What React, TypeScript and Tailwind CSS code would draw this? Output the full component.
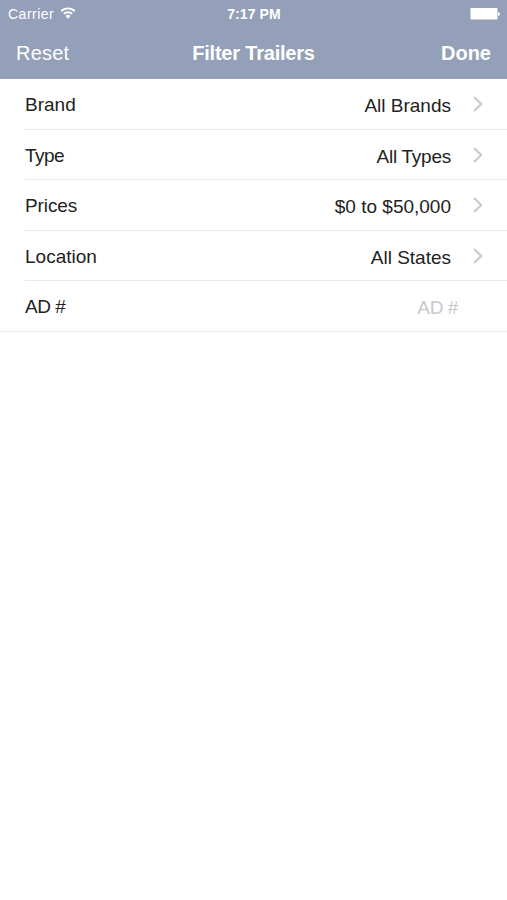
const filters = [
  { label: 'Brand', value: 'All Brands', labelClass: '', valueClass: '' },
  { label: 'Type', value: 'All Types', labelClass: 'tracking-[-0.5px]', valueClass: 'tracking-[-0.25px]' },
  { label: 'Prices', value: '$0 to $50,000', labelClass: 'tracking-[-0.1px]', valueClass: '' },
  { label: 'Location', value: 'All States', labelClass: '', valueClass: '' },
];

function WifiIcon() {
  return (
    <svg width="16" height="12" viewBox="0 0 16 12" fill="none" stroke="white" strokeWidth="1.9">
      <path d="M1.2 4.2a9.6 9.6 0 0 1 13.6 0" />
      <path d="M3.8 6.9a6 6 0 0 1 8.4 0" />
      <path d="M8 11.8 5.5 9a3.5 3.5 0 0 1 5 0Z" fill="white" stroke="none" />
    </svg>
  );
}

function BatteryIcon() {
  return (
    <svg width="30" height="12" viewBox="0 0 30 12" fill="white">
      <rect x="0.5" y="0" width="27" height="11.6" rx="1.2" />
      <path d="M28.1 3.9c2.4.4 2.4 3.6 0 4Z" />
    </svg>
  );
}

function ChevronIcon() {
  return (
    <svg width="10" height="16" viewBox="0 0 10 16" fill="none" stroke="#c7c7cc" strokeWidth="2">
      <path d="m1.2 1 7 7-7 7" />
    </svg>
  );
}

function FilterRow({ label, value, labelClass, valueClass }: (typeof filters)[number]) {
  return (
    <button
      type="button"
      className="ml-[25px] flex h-[50.6px] items-center border-b border-[#e9e9eb] pr-[24px] text-left"
    >
      <span className={`pt-[3px] ${labelClass}`}>{label}</span>
      <span className={`ml-auto pt-[5px] ${valueClass}`}>{value}</span>
      <span className="ml-[22px] pt-px">
        <ChevronIcon />
      </span>
    </button>
  );
}

export default function App() {
  return (
    <div className="flex min-h-[900px] flex-col bg-white font-['Liberation_Sans',sans-serif] text-[19px] text-[#222]">
      <header className="flex h-[79px] flex-col bg-[#949fb9] text-white">
        <div className="grid h-[27px] grid-cols-3 items-center pr-[7px] pl-2 text-[14px]">
          <div className="flex items-center gap-1.5">
            <span className="pt-px tracking-[0.5px]">Carrier</span>
            <span className="pb-[2px]">
              <WifiIcon />
            </span>
          </div>
          <span className="pt-px text-center font-bold tracking-[0.1px]">7:17 PM</span>
          <div className="flex justify-end">
            <BatteryIcon />
          </div>
        </div>
        <div className="grid h-[52px] grid-cols-3 items-center px-4 text-[20px]">
          <button type="button" className="text-left tracking-[0.2px]">Reset</button>
          <h1 className="text-center font-bold tracking-[-0.2px]">Filter Trailers</h1>
          <button type="button" className="text-right font-bold">Done</button>
        </div>
      </header>
      <main className="flex flex-col">
        {filters.map((filter) => (
          <FilterRow key={filter.label} {...filter} />
        ))}
        <label className="flex h-[50.6px] items-center border-b border-[#e9e9eb] pr-[49px] pl-[25px]">
          <span className="pt-[3px] tracking-[-0.5px]">AD #</span>
          <span className="ml-auto pt-[5px] tracking-[-0.4px] text-[#c7c7cc]">AD #</span>
        </label>
      </main>
    </div>
  );
}
